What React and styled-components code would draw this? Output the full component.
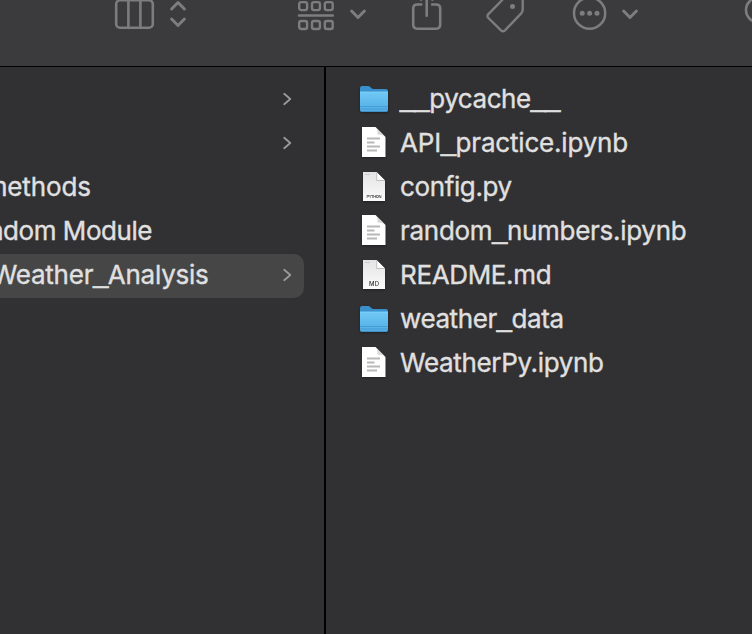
import React from "react";
import styled, { createGlobalStyle } from "styled-components";

const Global = createGlobalStyle`
  * { box-sizing: border-box; }
  body { margin: 0; background: #313032; overflow: hidden; }
`;

const Window = styled.div`
  width: 752px;
  height: 634px;
  display: flex;
  flex-direction: column;
  overflow: hidden;
  background: #313032;
  color: #e0e0e0;
  font-family: Inter, "Liberation Sans", sans-serif;
  font-size: 26px;
  -webkit-text-stroke: 0.35px #e0e0e0;
`;

const Toolbar = styled.header`
  height: 67px;
  flex: none;
  display: flex;
  align-items: flex-start;
  padding-left: 112px;
  background: #3b3a3c;
  border-bottom: 1px solid #000;
  overflow: hidden;
`;

const ToolIcon = styled.svg`
  flex: none;
  width: ${(p) => p.$w}px;
  height: 36px;
  margin-right: ${(p) => p.$gap || 0}px;
  fill: none;
  stroke: #7d7c7e;
  stroke-width: ${(p) => p.$stroke || 2.6};
  stroke-linecap: round;
  stroke-linejoin: round;
`;

const Columns = styled.main`
  flex: 1;
  display: flex;
  min-height: 0;
`;

const Column = styled.ul`
  list-style: none;
  margin: 0;
  padding: 11px 0 0;
  width: ${(p) => p.$w}px;
  flex: none;
  border-right: ${(p) => (p.$divider ? "2px solid #000" : "0")};
`;

const ParentRow = styled.li`
  height: 44px;
  width: 304px;
  display: flex;
  align-items: center;
  justify-content: space-between;
  padding-right: 11px;
  border-radius: 0 10px 10px 0;
  background: ${(p) => (p.$selected ? "#464646" : "transparent")};
`;

const ParentName = styled.span`
  display: flex;
  justify-content: flex-end;
  width: ${(p) => p.$w}px;
  overflow: hidden;
  white-space: nowrap;
  line-height: 40px;
  height: 43px;
  letter-spacing: ${(p) => p.$track || 0}px;
`;

const Chevron = styled.svg`
  width: 12px;
  height: 16px;
  flex: none;
  margin-bottom: 2px;
  fill: none;
  stroke: #9a999b;
  stroke-width: 1.8;
  stroke-linecap: round;
  stroke-linejoin: round;
`;

const FileRow = styled.li`
  height: 44px;
  display: flex;
  align-items: center;
  padding-left: 31px;
  gap: 9px;
`;

const FileIcon = styled.svg`
  width: 34px;
  height: 36px;
  flex: none;
  margin-bottom: 2px;
  filter: drop-shadow(0 1px 1px rgba(0, 0, 0, 0.35));
`;

const FileName = styled.span`
  white-space: nowrap;
  line-height: 40px;
  height: 43px;
  letter-spacing: ${(p) => p.$track || 0}px;
`;

const Underscore = styled.span`
  font-family: "Liberation Sans", sans-serif;
  font-size: 27px;
  line-height: 1;
  vertical-align: 2px;
  letter-spacing: -0.4px;
  -webkit-text-stroke-width: 0.7px;
`;

const DocLabel = styled.text`
  font-family: Inter, sans-serif;
  font-weight: 500;
  font-size: ${(p) => p.$size}px;
  fill: #333;
  text-anchor: middle;
  -webkit-text-stroke: 0;
`;

function Name({ text }) {
  return (
    <span>
      {text.split(/(_+)/).map((part, i) =>
        part.startsWith("_") ? <Underscore key={i}>{part}</Underscore> : part
      )}
    </span>
  );
}

function Folder() {
  return (
    <FileIcon viewBox="0 0 34 36">
      <defs>
        <linearGradient id="folderFront" x1="0" y1="0" x2="0" y2="1">
          <stop offset="0" stopColor="#6fc8f5" />
          <stop offset="1" stopColor="#53ace3" />
        </linearGradient>
      </defs>
      <path d="M3 7Q3 5 5 5H11Q12.5 5 13.5 6.2Q14.8 8 16.5 8H29Q31 8 31 10V16H3Z" fill="#3990cd" />
      <path d="M3 11H31V29Q31 31 29 31H5Q3 31 3 29Z" fill="url(#folderFront)" />
      <path d="M3 11H31" stroke="#8bd5fa" strokeWidth=".8" />
      <path d="M3 25.5H31M3 28H31" stroke="#3e97d0" strokeWidth=".8" />
      <path d="M4 30.6H30" stroke="#3784b8" strokeWidth=".8" />
    </FileIcon>
  );
}

function TextDoc() {
  return (
    <FileIcon viewBox="0 2 34 36">
      <path d="M5 4H18.5L28.5 14V34H5Z" fill="#fff" />
      <path d="M18.5 4Q20.5 5 20.5 11.5Q27 11.5 28.5 14Z" fill="#d7d7d7" />
      <path d="M10 15.5H23M10 19.5H17.5M10 23.5H23M10 27.5H20" stroke="#b8b8b8" strokeWidth="1.8" />
    </FileIcon>
  );
}

function LabelDoc({ label, size, y, spread }) {
  return (
    <FileIcon viewBox="0 1 34 36">
      <defs>
        <linearGradient id="paper" x1="0" y1="0" x2="0" y2="1">
          <stop offset="0" stopColor="#e4e4e4" />
          <stop offset="1" stopColor="#fbfbfb" />
        </linearGradient>
      </defs>
      <path d="M6 4H19.5L28 12.5V33H6Z" fill="url(#paper)" />
      <path d="M19.5 4V12.5H28Z" fill="#fff" />
      <path d="M19.8 12.5H28M19.7 4.5V12.5" stroke="#a8a8a8" strokeWidth=".7" />
      <path d="M8 6.5H13" stroke="#b9b9b9" strokeWidth=".6" />
      <DocLabel x="17" y={y} $size={size} textLength={spread}>{label}</DocLabel>
    </FileIcon>
  );
}

const parents = [
  { name: "", w: 0, arrow: true },
  { name: "", w: 0, arrow: true },
  { name: "methods", w: 91, track: -0.1 },
  { name: "Random Module", w: 152, track: -0.45 },
  { name: "Weather_Analysis", w: 208.5, track: -0.25, arrow: true, selected: true },
];

const files = [
  { name: "__pycache__", track: -0.45, icon: <Folder /> },
  { name: "API_practice.ipynb", track: -0.19, icon: <TextDoc /> },
  { name: "config.py", track: -0.38, icon: <LabelDoc label="PYTHON" size={4} y={30} spread={15} /> },
  { name: "random_numbers.ipynb", track: -0.29, icon: <TextDoc /> },
  { name: "README.md", track: -0.35, icon: <LabelDoc label="MD" size={6} y={30.4} spread={10} /> },
  { name: "weather_data", track: -0.4, icon: <Folder /> },
  { name: "WeatherPy.ipynb", track: -0.34, icon: <TextDoc /> },
];

export default function App() {
  return (
    <Window>
      <Global />
      <Toolbar>
        <ToolIcon $w={44} $gap={10} viewBox="0 0 44 36">
          <rect x="4.2" y="0.2" width="36.6" height="27.6" rx="3.8" />
          <path d="M16.4 0V28M28.4 0V28" />
        </ToolIcon>
        <ToolIcon $w={24} $gap={106} $stroke={3} viewBox="0 0 24 36">
          <path d="M5.6 9L12 2.5L18.4 9M5.6 19L12 25.5L18.4 19" />
        </ToolIcon>
        <ToolIcon $w={42} $gap={8} $stroke={2.4} viewBox="0 0 42 36">
          {[3.2, 16, 28.8].map((x) => (
            <React.Fragment key={x}>
              <rect x={x} y="2.1" width="7.9" height="8" rx="2" />
              <rect x={x} y="21" width="7.9" height="8" rx="2" />
            </React.Fragment>
          ))}
          <path d="M3 15.5H36.8" />
        </ToolIcon>
        <ToolIcon $w={24} $gap={38} $stroke={3} viewBox="0 0 24 36">
          <path d="M5.6 11L12 17.5L18.4 11" />
        </ToolIcon>
        <ToolIcon $w={38} $gap={38} viewBox="0 0 38 36">
          <path d="M13.3 4.5H9.2Q5.2 4.5 5.2 8.5V24.6Q5.2 28.7 9.2 28.7H28.2Q32.2 28.7 32.2 24.6V8.5Q32.2 4.5 28.2 4.5H24.1M18.7 15.8V-6M13 -.4L18.7 -6L24.4 -.4" />
        </ToolIcon>
        <ToolIcon $w={44} $gap={42} $stroke={2.4} viewBox="0 0 44 36">
          <path d="M4.4 14.2L21.6 -3.5Q23 -5 25 -5H34Q38.7 -5 38.7 0V9.5Q38.7 12 37 13.6L21 30.3Q19 32.2 17 30.3L4.4 18Q2.5 16.2 4.4 14.2Z" />
          <circle cx="28.5" cy="6.4" r="2.5" fill="#7d7c7e" stroke="none" />
        </ToolIcon>
        <ToolIcon $w={38} $gap={10} $stroke={2.5} viewBox="0 0 38 36">
          <circle cx="19.6" cy="13.2" r="15.6" />
          <g fill="#7d7c7e" stroke="none">
            <circle cx="12.2" cy="13.3" r="2.5" />
            <circle cx="19.6" cy="13.3" r="2.5" />
            <circle cx="27" cy="13.3" r="2.5" />
          </g>
        </ToolIcon>
        <ToolIcon $w={24} $gap={102} $stroke={3} viewBox="0 0 24 36">
          <path d="M5.6 11L12 17.5L18.4 11" />
        </ToolIcon>
        <ToolIcon $w={40} viewBox="0 0 40 36">
          <circle cx="14" cy="10" r="12" />
        </ToolIcon>
      </Toolbar>
      <Columns>
        <Column $w={326} $divider>
          {parents.map((p, i) => (
            <ParentRow key={i} $selected={p.selected}>
              <ParentName $w={p.w} $track={p.track}>
                <Name text={p.name} />
              </ParentName>
              {p.arrow && (
                <Chevron viewBox="0 0 12 16">
                  <path d="M3.2 2.8L9.3 8L3.2 13.2" />
                </Chevron>
              )}
            </ParentRow>
          ))}
        </Column>
        <Column $w={426}>
          {files.map((f) => (
            <FileRow key={f.name}>
              {f.icon}
              <FileName $track={f.track}>
                <Name text={f.name} />
              </FileName>
            </FileRow>
          ))}
        </Column>
      </Columns>
    </Window>
  );
}
